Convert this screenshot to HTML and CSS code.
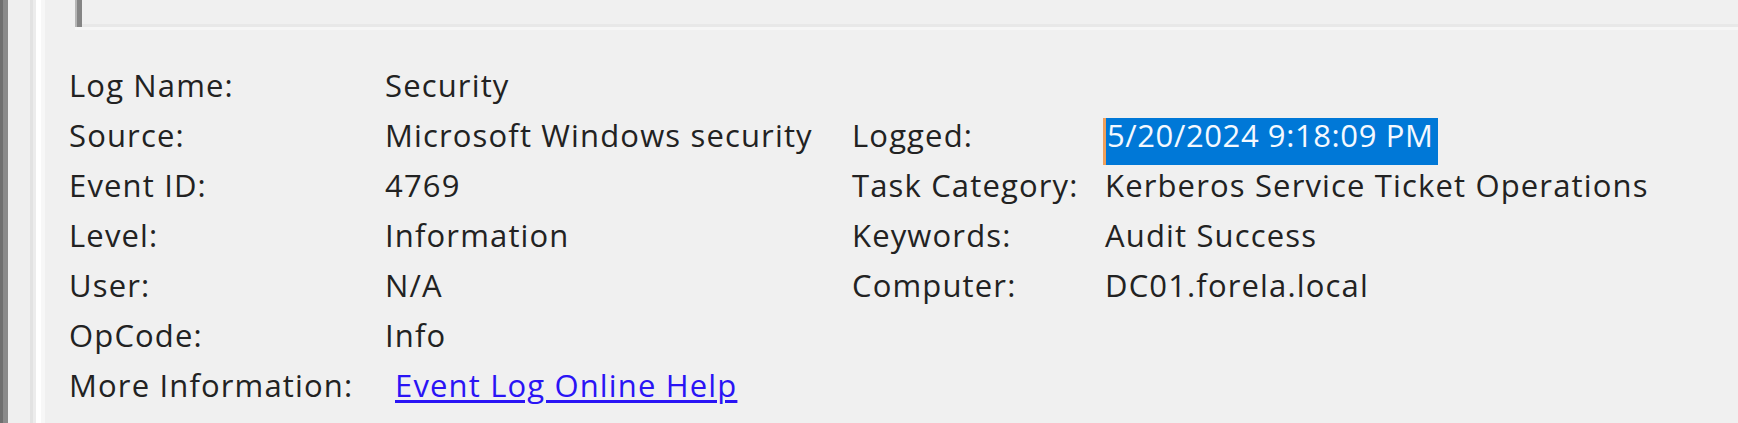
FILE: index.html
```html
<!DOCTYPE html>
<html>
<head>
<meta charset="utf-8">
<link rel="stylesheet" href="styles.css">
</head>
<body>
<div class="edge-dark"></div>
<div class="edge-gap"></div>
<div class="edge-line1"></div>
<div class="edge-line2"></div>
<div class="edge-white"></div>
<div class="edge-soft"></div>
<main class="panel">
  <div class="desc">
    <div class="desc-box">
      <div class="desc-scroll"></div>
      <div class="desc-field"></div>
    </div>
  </div>
  <div class="details">
    <div class="label">Log Name:</div><div class="value">Security</div><div></div><div></div>
    <div class="label">Source:</div><div class="value">Microsoft Windows security</div><div class="label">Logged:</div><div class="value"><span class="selected">5/20/2024 9:18:09 PM</span></div>
    <div class="label">Event ID:</div><div class="value">4769</div><div class="label">Task Category:</div><div class="value">Kerberos Service Ticket Operations</div>
    <div class="label">Level:</div><div class="value">Information</div><div class="label">Keywords:</div><div class="value">Audit Success</div>
    <div class="label">User:</div><div class="value">N/A</div><div class="label">Computer:</div><div class="value">DC01.forela.local</div>
    <div class="label">OpCode:</div><div class="value">Info</div><div></div><div></div>
    <div class="label">More Information:</div><div class="value link-cell"><a class="link" href="#">Event Log Online Help</a></div><div></div><div></div>
  </div>
</main>
</body>
</html>
```
FILE: styles.css
```css
html, body {
  margin: 0;
  padding: 0;
}
body {
  width: 1738px;
  height: 423px;
  overflow: hidden;
  background: #f0f0f0;
  display: flex;
  font-family: "Open Sans", "Noto Sans", sans-serif;
  font-size: 31px;
  letter-spacing: 1.15px;
  color: #222222;
}
.edge-dark {
  width: 8px;
  flex: none;
  background: linear-gradient(to right, #6f6f6f 0 3px, #8a8a8a 3px);
}
.edge-gap { width: 22px; flex: none; background: #efefef; }
.edge-line1 { width: 3px; flex: none; background: #e2e2e2; }
.edge-line2 { width: 3px; flex: none; background: #ececec; }
.edge-white { width: 5px; flex: none; background: #ffffff; }
.edge-soft { width: 4px; flex: none; background: #f7f7f7; }
.panel {
  flex: 1;
  min-width: 0;
  display: flex;
  flex-direction: column;
}
.desc {
  margin-left: 30px;
  border-bottom: 3px solid #f6f6f6;
}
.desc-box {
  display: flex;
  height: 27px;
  border-left: 2px solid #b6b6b6;
}
.desc-scroll {
  width: 5px;
  background: #858585;
}
.desc-field {
  flex: 1;
  height: 24px;
  border-bottom: 3px solid #e8e8e8;
}
.details {
  margin-top: 30px;
  padding-left: 24px;
  display: grid;
  grid-template-columns: 316px 467px 253px 1fr;
  grid-auto-rows: 50px;
  line-height: 50px;
  white-space: nowrap;
}
.selected {
  display: inline-block;
  background: #0078d7;
  color: #f4f9ff;
  letter-spacing: 0.6px;
  line-height: 31px;
  padding: 2px 5px 14px 1px;
  margin-left: -2px;
  border-left: 3px solid #f0a05a;
  vertical-align: baseline;
}
.link-cell {
  padding-left: 10px;
}
.link {
  color: #2a14f5;
  text-decoration: underline;
  text-decoration-thickness: 3px;
  text-underline-offset: 3px;
}
```
